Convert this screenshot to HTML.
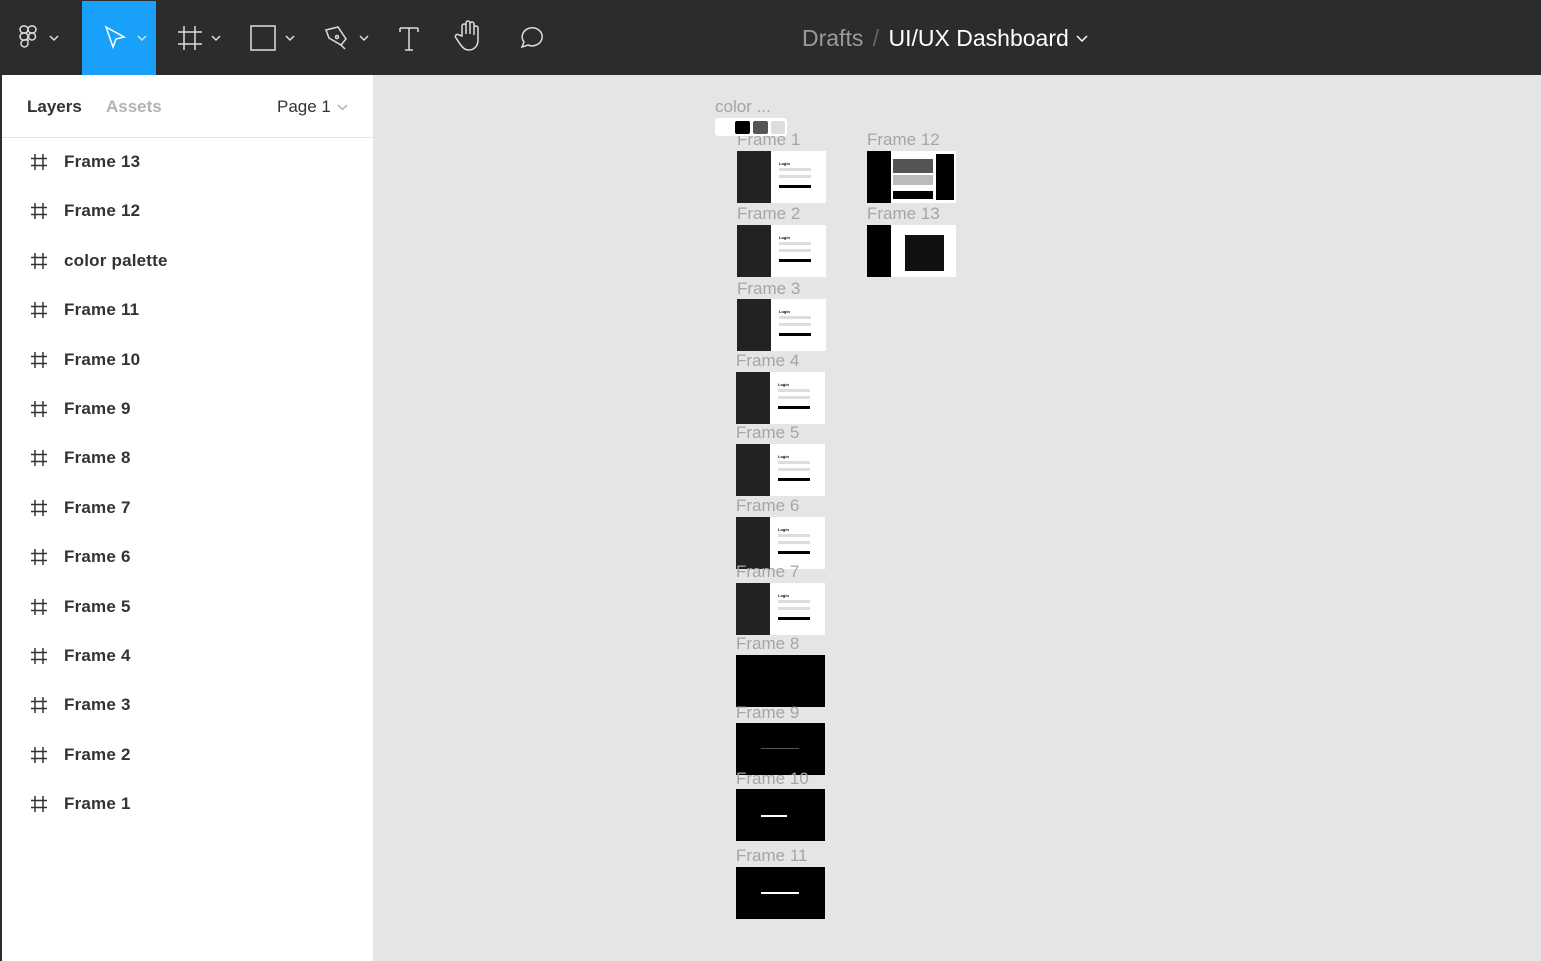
<!DOCTYPE html><html><head><style>
body{margin:0;width:1541px;height:961px;overflow:hidden;font-family:"Liberation Sans",sans-serif;background:#e5e5e5;position:relative}
.top{position:absolute;left:0;top:0;width:1541px;height:75px;background:#2c2c2c}
.side{position:absolute;left:0;top:75px;width:373px;height:886px;background:#fff;border-left:2px solid #2c2c2c;box-sizing:border-box}
.ab{position:absolute}
.li{position:absolute;left:64px;font-size:17px;color:#333;font-weight:bold;letter-spacing:.2px}
.hs{position:absolute;left:30px;width:18px;height:18px}
.lb{position:absolute;font-size:17px;color:#a5a5a5;white-space:nowrap}
.fr{position:absolute;width:89px;height:52px;background:#fff}
.fr .d{position:absolute;left:0;top:0;width:34px;height:52px;background:#222}
.fr .t{position:absolute;left:42px;top:10px;font-size:4px;font-weight:bold}
.fr .i{position:absolute;left:42px;width:32px;height:3px;background:#ddd}
.fr .b{position:absolute;left:42px;top:34px;width:32px;height:3px;background:#000}
.bk{position:absolute;width:89px;height:52px;background:#000}
</style></head><body>
<div class="top">
<div class="ab" style="left:82px;top:1px;width:74px;height:74px;background:#18a0fb"></div>
<svg class="ab" style="left:0;top:0" width="560" height="75" fill="none" stroke="#ddd" stroke-width="1.5">
<g transform="translate(20,26)"><rect x="0" y="0" width="8" height="7" rx="3.5"/><rect x="8" y="0" width="8" height="7" rx="3.5"/><rect x="0" y="7" width="8" height="7" rx="3.5"/><circle cx="12" cy="10.5" r="3.5"/><path d="M4 14a3.5 3.5 0 1 0 4 3.5V14z"/></g>
<path d="M50 36l4 4 4-4M138 36l4 4 4-4M212 36l4 4 4-4M286 36l4 4 4-4M360 36l4 4 4-4"/>
<path stroke="#fff" d="M106 27l18 10-8 2-3 8z"/>
<path d="M184 26v24M195 26v24M178 32h24M178 44h24"/>
<rect x="251" y="26" width="24" height="24"/>
<path d="M326 30l12-3 8 12-5 6-12-7z"/><circle cx="337" cy="37" r="1.5"/><path d="M341 45l4 4"/>
<path d="M400 28h18M409 28v22M405 50h8M400 28v4M418 28v4"/>
<path d="M462 36v-10a2 2 0 0 1 4 0v8v-11a2 2 0 0 1 4 0v11v-10a2 2 0 0 1 4 0v11v-7a2 2 0 0 1 4 0v12c0 6-4 10-9 10c-4 0-6-2-9-6l-4-6a2 2 0 0 1 3-3z"/>
<path d="M522 47l2-5a10 9 0 1 1 4 3z"/>
</svg>
<div class="ab" style="left:802px;top:25px;font-size:23px;color:#9a9a9a;white-space:nowrap">Drafts <span style="color:#666;margin:0 3px">/</span> <span style="color:#fff">UI/UX Dashboard</span></div>
<svg class="ab" style="left:1076px;top:35px" width="12" height="8" fill="none" stroke="#fff" stroke-width="1.5"><path d="M1 1l5 5 5-5"/></svg>
</div>
<div class="side">
<div class="ab" style="left:25px;top:22px;font-size:17px;font-weight:bold;color:#333">Layers</div>
<div class="ab" style="left:104px;top:22px;font-size:17px;font-weight:bold;color:#b3b3b3">Assets</div>
<div class="ab" style="left:275px;top:22px;font-size:17px;color:#333">Page 1</div>
<svg class="ab" style="left:335px;top:29px" width="11" height="7" fill="none" stroke="#aaa" stroke-width="1.3"><path d="M1 1l4.5 4.5 4.5-4.5"/></svg>
<div class="ab" style="left:0;top:62px;width:371px;height:1px;background:#e5e5e5"></div>
</div>
<div id="L"></div>
<script>
var n=["Frame 13","Frame 12","color palette","Frame 11","Frame 10","Frame 9","Frame 8","Frame 7","Frame 6","Frame 5","Frame 4","Frame 3","Frame 2","Frame 1"],h="";
n.forEach(function(t,i){var y=152+i*49.4;h+='<svg class="hs" style="top:'+(y+1)+'px" fill="none" stroke="#333" stroke-width="1.5"><path d="M5 1v16M13 1v16M1 5.5h16M1 12.5h16"/></svg><div class="li" style="top:'+y+'px">'+t+'</div>';});
var f=[[1,139,151,737],[2,213,225,737],[3,288,299,737],[4,360,372,736],[5,432,444,736],[6,505,517,736],[7,571,583,736]];
f.forEach(function(a){h+='<div class="lb" style="left:'+a[3]+'px;top:'+(a[1]-9)+'px">Frame '+a[0]+'</div><div class="fr" style="left:'+a[3]+'px;top:'+a[2]+'px"><div class="d"></div><div class="t">Login</div><div class="i" style="top:17px"></div><div class="i" style="top:24px"></div><div class="b"></div></div>';});
[[8,643,655],[9,712,723],[10,778,789],[11,855,867]].forEach(function(a){h+='<div class="lb" style="left:736px;top:'+(a[1]-9)+'px">Frame '+a[0]+'</div><div class="bk" style="left:736px;top:'+a[2]+'px"></div>';});
h+='<div class="ab" style="left:761px;top:748px;width:38px;height:1px;background:#555"></div><div class="ab" style="left:761px;top:815px;width:26px;height:2px;background:#fff"></div><div class="ab" style="left:761px;top:892px;width:38px;height:2px;background:#fff"></div>';
h+='<div class="lb" style="left:715px;top:97px">color ...</div><div class="ab" style="left:715px;top:118px;width:72px;height:18px;background:#fff;border-radius:3px"></div><div class="ab" style="left:735px;top:121px;width:15px;height:13px;background:#000;border-radius:2px"></div><div class="ab" style="left:753px;top:121px;width:15px;height:13px;background:#555;border-radius:2px"></div><div class="ab" style="left:771px;top:121px;width:14px;height:13px;background:#ddd;border-radius:2px"></div>';
h+='<div class="lb" style="left:867px;top:130px">Frame 12</div><div class="fr" style="left:867px;top:151px"><div class="d" style="width:24px;background:#000"></div><div class="ab" style="left:26px;top:8px;width:40px;height:14px;background:#555"></div><div class="ab" style="left:26px;top:24px;width:40px;height:10px;background:#bbb"></div><div class="ab" style="left:26px;top:40px;width:40px;height:8px;background:#000"></div><div class="ab" style="left:69px;top:3px;width:18px;height:46px;background:#000"></div></div>';
h+='<div class="lb" style="left:867px;top:204px">Frame 13</div><div class="fr" style="left:867px;top:225px"><div class="d" style="width:24px;background:#000"></div><div class="ab" style="left:38px;top:10px;width:39px;height:36px;background:#111"></div></div>';
document.getElementById("L").innerHTML=h;
</script>
</body></html>
